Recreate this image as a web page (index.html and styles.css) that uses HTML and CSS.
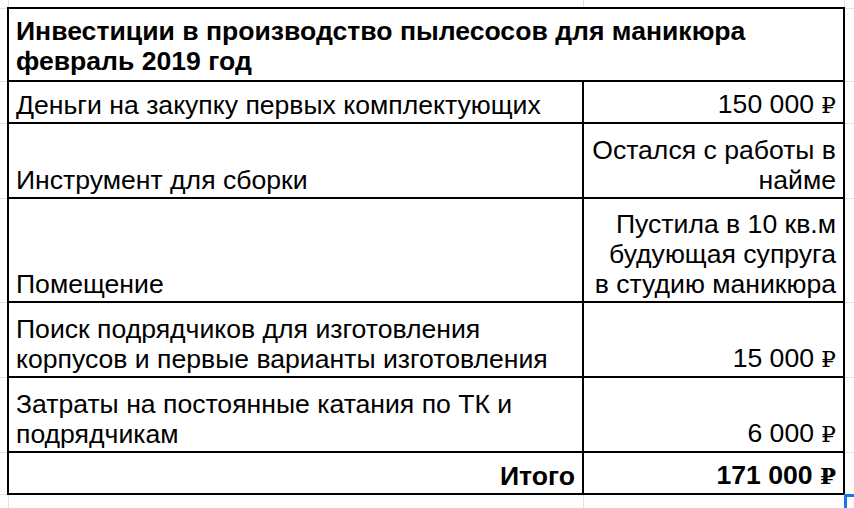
FILE: index.html
```html
<!DOCTYPE html>
<html lang="ru">
<head>
<meta charset="utf-8">
<link rel="stylesheet" href="styles.css">
</head>
<body>
<table class="sheet">
  <colgroup>
    <col class="gut-l"><col class="col-a"><col class="col-b"><col class="gut-r">
  </colgroup>
  <tr class="r-top"><td class="g"></td><td class="g"></td><td class="g"></td><td class="g"></td></tr>
  <tr class="r-title">
    <td class="g"></td>
    <td class="c title" colspan="2">Инвестиции в производство пылесосов для маникюра<br>февраль 2019 год</td>
    <td class="g"></td>
  </tr>
  <tr class="r-1">
    <td class="g"></td>
    <td class="c">Деньги на закупку первых комплектующих</td>
    <td class="c num">150&nbsp;000&nbsp;<span class="rub">₽</span></td>
    <td class="g"></td>
  </tr>
  <tr class="r-2">
    <td class="g"></td>
    <td class="c">Инструмент для сборки</td>
    <td class="c num">Остался с работы в<br>найме</td>
    <td class="g"></td>
  </tr>
  <tr class="r-3">
    <td class="g"></td>
    <td class="c">Помещение</td>
    <td class="c num">Пустила в 10 кв.м<br>будующая супруга<br>в студию маникюра</td>
    <td class="g"></td>
  </tr>
  <tr class="r-2">
    <td class="g"></td>
    <td class="c">Поиск подрядчиков для изготовления<br>корпусов и первые варианты изготовления</td>
    <td class="c num">15&nbsp;000&nbsp;<span class="rub">₽</span></td>
    <td class="g"></td>
  </tr>
  <tr class="r-2">
    <td class="g"></td>
    <td class="c">Затраты на постоянные катания по ТК и<br>подрядчикам</td>
    <td class="c num">6&nbsp;000&nbsp;<span class="rub">₽</span></td>
    <td class="g"></td>
  </tr>
  <tr class="r-1">
    <td class="g"></td>
    <td class="c num bold">Итого</td>
    <td class="c num bold">171&nbsp;000&nbsp;<span class="rub">₽</span></td>
    <td class="g"></td>
  </tr>
  <tr class="r-bottom"><td class="g"></td><td class="g"></td><td class="g"></td><td class="g sel-below"></td></tr>
</table>
</body>
</html>
```

FILE: styles.css
```css
html, body {
  margin: 0;
  padding: 0;
  background: #ffffff;
}
body {
  font-family: "Liberation Sans", Arial, "DejaVu Sans", sans-serif;
  color: #000;
  overflow: hidden;
}
.sheet {
  border-collapse: collapse;
  table-layout: fixed;
  width: 854px;
}
.gut-l { width: 8px; }
.col-a { width: 575px; }
.col-b { width: 261px; }
.gut-r { width: 10px; }

.g {
  border: 1px solid #e2e2e2;
  padding: 0;
}
.r-top .g { border-top: none; }
.sheet tr .g:first-child { border-left: none; }
.sheet tr .g:last-child { border-right: none; }
.r-bottom .g { border-bottom: none; }

.c {
  border: 2px solid #000;
  padding: 0 7px 2px 7px;
  font-size: 26.6px;
  line-height: 30px;
  vertical-align: bottom;
  text-align: left;
  white-space: nowrap;
}
.title {
  font-weight: bold;
  vertical-align: top;
  padding-top: 7px;
}
.num { text-align: right; }
.bold { font-weight: bold; }
.rub {
  font-family: "DejaVu Serif", serif;
  font-weight: normal;
  font-size: 23px;
}
.bold .rub { font-weight: bold; }

.r-top { height: 8px; }
.r-title { height: 73px; }
.r-1 { height: 42px; }
.r-2 { height: 75px; }
.r-3 { height: 104px; }
.r-bottom { height: 14px; }

.sel-below {
  position: relative;
}
.sel-below::before {
  content: "";
  position: absolute;
  left: -1px;
  top: -1px;
  width: 12px;
  height: 3px;
  background: #1a73e8;
}
.sel-below::after {
  content: "";
  position: absolute;
  left: -1px;
  top: -1px;
  width: 3px;
  height: 16px;
  background: #1a73e8;
}
```
